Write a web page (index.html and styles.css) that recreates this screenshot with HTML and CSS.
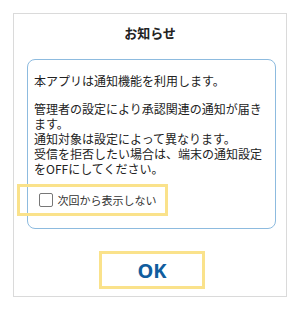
FILE: index.html
```html
<!DOCTYPE html>
<html lang="ja">
<head>
  <meta charset="UTF-8" />
  <title>お知らせ</title>
  <link rel="stylesheet" href="styles.css">
</head>
<body>
  <div class="dialog">
    <div class="dialog-title">お知らせ</div>

    <div class="notice">
      <p class="notice-text">本アプリは通知機能を利用します。</p>
      <p class="notice-text">管理者の設定により承認関連の通知が届きます。<br/>通知対象は設定によって異なります。<br/>受信を拒否したい場合は、端末の通知設定をOFFにしてください。</p>

      <label class="skip-row">
        <span class="checkbox"></span>
        <span class="skip-label">次回から表示しない</span>
      </label>
    </div>

    <div class="actions">
      <button class="ok-button">OK</button>
    </div>
  </div>
</body>
</html>
```

FILE: styles.css
```css
html, body {
  margin: 0;
  padding: 0;
  background: #fff;
  font-family: "Noto Sans CJK JP", "Noto Sans", sans-serif;
  color: #222;
}

.dialog {
  box-sizing: border-box;
  width: 274px;
  height: 284px;
  margin: 13px 0 0 13px;
  border: 1px solid #dadada;
  display: flex;
  flex-direction: column;
}

.dialog-title {
  font-size: 13px;
  font-weight: bold;
  text-align: center;
  line-height: 18px;
  padding-top: 10px;
  height: 35px;
  box-sizing: border-box;
}

.notice {
  margin: 10px 10px 0 13px;
  border: 1.5px solid #8dbbdf;
  border-radius: 8px;
  padding: 13px 10px 12px 6px;
}

.notice-text {
  margin: 0 0 13px 0;
  font-size: 12px;
  line-height: 15px;
}

.notice-text:last-of-type {
  margin-bottom: 8px;
}

.skip-row {
  display: flex;
  align-items: center;
  gap: 5px;
  width: 151px;
  height: 32px;
  box-sizing: border-box;
  margin-left: -17.5px;
  padding-left: 19px;
  border: 3px solid #fae28b;
}

.checkbox {
  width: 14px;
  height: 14px;
  box-sizing: border-box;
  border: 1.5px solid #777;
  border-radius: 2px;
  background: #fff;
}

.skip-label {
  font-size: 11px;
  color: #333;
}

.actions {
  display: flex;
  justify-content: center;
  padding: 22px 0 0 4px;
}

.ok-button {
  width: 106px;
  height: 38px;
  box-sizing: border-box;
  border: 3px solid #fae28b;
  background: #fff;
  color: #105d9e;
  font-family: "Noto Sans", sans-serif;
  font-weight: bold;
  font-size: 20px;
  padding: 0;
  cursor: pointer;
}
```
